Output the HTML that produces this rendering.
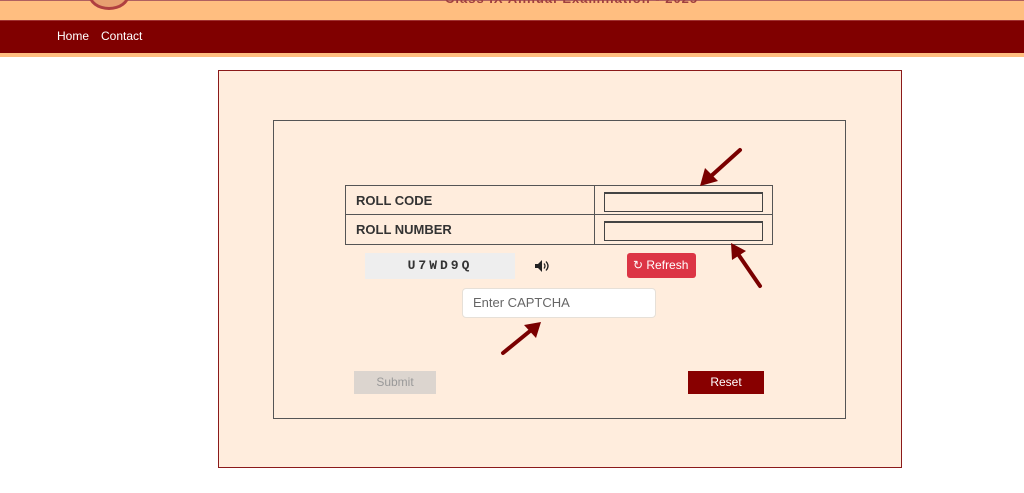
<!DOCTYPE html>
<html><head><meta charset="utf-8"><style>
*{margin:0;padding:0;box-sizing:border-box}
body{width:1024px;height:493px;background:#fff;font-family:"Liberation Sans",Arial,sans-serif;position:relative;overflow:hidden}
.a{position:absolute}
</style></head><body>
<div class="a" style="left:0;top:0;width:1024px;height:20px;background:#ffbe80;border-top:1px solid #b06060"></div>
<div class="a" style="left:88px;top:-22px;width:42px;height:32px;border-radius:50%;border:3px solid #b04040;background:#e8a070"></div>
<div class="a" style="left:445px;top:-9px;font-size:13px;color:#a04040;font-weight:bold;letter-spacing:1px">Class IX Annual Examination - 2025</div>
<div class="a" style="left:0;top:20px;width:1024px;height:33px;background:#800000;border-top:1px solid #a03030"></div>
<div class="a" style="left:0;top:53px;width:1024px;height:4px;background:#ffbe80"></div>
<div class="a" style="left:57px;top:29px;color:#fff;font-size:12px">Home</div>
<div class="a" style="left:101px;top:29px;color:#fff;font-size:12px">Contact</div>

<div class="a" style="left:218px;top:70px;width:684px;height:398px;background:#ffeddd;border:1px solid #8b1a1a"></div>
<div class="a" style="left:273px;top:120px;width:573px;height:299px;border:1px solid #555"></div>

<div class="a" style="left:345px;top:185px;width:428px;height:60px;border:1px solid #555"></div>
<div class="a" style="left:345px;top:214px;width:428px;height:1px;background:#555"></div>
<div class="a" style="left:594px;top:185px;width:1px;height:60px;background:#555"></div>
<div class="a" style="left:356px;top:193px;font-size:13px;font-weight:bold;color:#333">ROLL CODE</div>
<div class="a" style="left:356px;top:222px;font-size:13px;font-weight:bold;color:#333">ROLL NUMBER</div>
<div class="a" style="left:604px;top:192px;width:159px;height:20px;border:1px solid #444;border-top-width:2px;background:#ffeddd"></div>
<div class="a" style="left:604px;top:221px;width:159px;height:20px;border:1px solid #444;border-top-width:2px;background:#ffeddd"></div>

<div class="a" style="left:365px;top:253px;width:150px;height:26px;background:#eeeeee;text-align:center;line-height:26px;font-family:'Liberation Mono',monospace;font-weight:bold;font-size:13px;letter-spacing:3px;color:#333">U7WD9Q</div>
<svg class="a" style="left:534px;top:259px" width="16" height="14" viewBox="0 0 16 14"><path d="M1 5h3l4-4v12l-4-4H1z" fill="#222"/><path d="M10 4.5q2 2.5 0 5M12 2.5q4 4.5 0 9" stroke="#222" stroke-width="1.3" fill="none"/></svg>
<div class="a" style="left:627px;top:253px;width:69px;height:25px;background:#dc3545;border-radius:3px;color:#fff;font-size:12px;line-height:25px;padding-left:6px">&#x21bb; Refresh</div>

<div class="a" style="left:462px;top:288px;width:194px;height:30px;background:#fff;border:1px solid #e6e0d8;border-radius:4px;font-size:13px;color:#666;line-height:28px;padding-left:10px">Enter CAPTCHA</div>

<div class="a" style="left:354px;top:371px;width:82px;height:23px;background:#dcd5cf;color:#999;font-size:12px;text-align:center;line-height:23px">Submit</div>
<div class="a" style="left:688px;top:371px;width:76px;height:23px;background:#880000;color:#fff;font-size:12px;text-align:center;line-height:23px">Reset</div>

<svg class="a" style="left:0;top:0" width="1024" height="493">
<g stroke="#7a0000" stroke-width="4" fill="#7a0000" stroke-linecap="round">
<line x1="740" y1="150" x2="710" y2="177"/>
<polygon points="700,186 705,168 718,181" stroke="none"/>
<line x1="760" y1="286" x2="738" y2="254"/>
<polygon points="731,243 746,251 732,260" stroke="none"/>
<line x1="503" y1="353" x2="530" y2="331"/>
<polygon points="541,322 536,338 524,325" stroke="none"/>
</g></svg>
</body></html>
